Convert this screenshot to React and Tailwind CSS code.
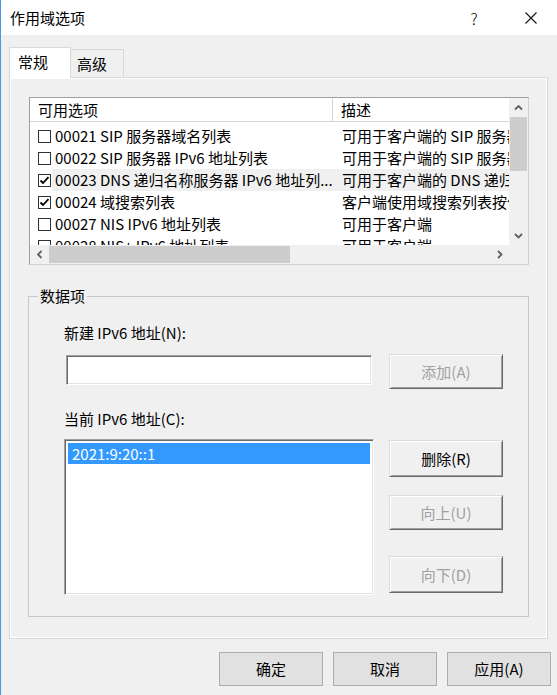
import React from "react";

const F = "font-['Noto_Sans_CJK_SC','Noto_Sans',sans-serif]";

function Chev({ dir }) {
  const p = {
    up: "M1 5.5 L4.5 2 L8 5.5",
    down: "M1 2 L4.5 5.5 L8 2",
    left: "M5.5 1 L2 4.5 L5.5 8",
    right: "M2 1 L5.5 4.5 L2 8",
  }[dir];
  const v = dir === "up" || dir === "down";
  return (
    <svg width={v ? 9 : 7} height={v ? 7 : 9} viewBox={v ? "0 0 9 7" : "0 0 7 9"}>
      <path d={p} fill="none" stroke="#606060" strokeWidth="1.8" />
    </svg>
  );
}

function Checkbox({ checked }) {
  return (
    <div className="w-[13px] h-[13px] border border-[#333333] bg-white flex items-center justify-center shrink-0">
      {checked && (
        <svg width="11" height="11" viewBox="0 0 11 11">
          <path d="M1.5 5.5 L4 8 L9.5 2.2" fill="none" stroke="#000" strokeWidth="1.8" />
        </svg>
      )}
    </div>
  );
}

const rows = [
  { c: false, t: "00021 SIP 服务器域名列表", d: "可用于客户端的 SIP 服务器域名列表" },
  { c: false, t: "00022 SIP 服务器 IPv6 地址列表", d: "可用于客户端的 SIP 服务器 IPv6 地址列表" },
  { c: true, t: "00023 DNS 递归名称服务器 IPv6 地址列...", d: "可用于客户端的 DNS 递归名称服务器", h: true },
  { c: true, t: "00024 域搜索列表", d: "客户端使用域搜索列表按优先顺序解析" },
  { c: false, t: "00027 NIS IPv6 地址列表", d: "可用于客户端" },
  { c: false, t: "00028 NIS+ IPv6 地址列表", d: "可用于客户端" },
];

const raised =
  "border border-t-[#dcdcdc] border-l-[#dcdcdc] border-b-[#696969] border-r-[#696969] shadow-[inset_1px_1px_0_#ffffff,inset_-1px_-1px_0_#a0a0a0] bg-[#f0f0f0] flex items-center justify-center text-[15px]";
const sunken =
  "border border-t-[#a0a0a0] border-l-[#a0a0a0] border-b-[#ffffff] border-r-[#ffffff] shadow-[inset_1px_1px_0_#696969,inset_-1px_-1px_0_#e3e3e3] bg-white";
const flatBtn =
  "w-[104px] h-[34px] bg-[#e1e1e1] border border-[#adadad] flex items-center justify-center text-[15px] text-black";

export default function App() {
  return (
    <div className={`${F} w-[557px] h-[695px] bg-[#f0f0f0] border-l border-[#4a9ae6] text-black text-[15px] leading-[20px] overflow-hidden`}>
      {/* title bar */}
      <div className="h-[35px] bg-white flex items-center pl-[9px]">
        <span className="flex-1">作用域选项</span>
        <span className="w-[14px] text-center font-light text-[16px] mr-[44px]">?</span>
        <svg width="12" height="12" viewBox="0 0 12 12" className="mr-[20px]">
          <path d="M0.5 0.5 L11.5 11.5 M11.5 0.5 L0.5 11.5" stroke="#111" strokeWidth="1.1" />
        </svg>
      </div>

      {/* tabs */}
      <div className="pl-[8px] pt-[12px] flex items-start">
        <div className="relative z-10 -mb-px h-[31px] w-[62px] bg-white border border-b-0 border-[#d9d9d9] pl-[8px] pt-[4px]">
          常规
        </div>
        <div className="mt-[2px] h-[28px] w-[53px] bg-[#f0f0f0] border border-l-0 border-b-0 border-[#d9d9d9] pl-[6px] pt-[4px]">
          高级
        </div>
      </div>

      {/* panel */}
      <div className="ml-[8px] w-[539px] h-[562px] border border-[#d9d9d9] shadow-[inset_0_0_0_1px_#ffffff] bg-[#f0f0f0] pt-[19px] pl-[19px]">
        {/* list view */}
        <div className="w-[500px] h-[168px] border border-t-[#a0a0a0] border-l-[#a0a0a0] border-r-[#d0d0d0] border-b-[#d0d0d0] bg-white flex flex-col">
          <div className="flex h-[147px]">
            <div className="w-[479px] overflow-hidden">
              <div className="h-[24px] flex items-center border-b border-[#d5d5d5] bg-white">
                <div className="w-[303px] h-full flex items-center pl-[8px] border-r border-[#d5d5d5]">可用选项</div>
                <div className="pl-[8px]">描述</div>
              </div>
              <div className="pt-[3px] h-[123px] overflow-hidden">
                {rows.map((r, i) => (
                  <div key={i} className="h-[22px] flex items-center whitespace-nowrap">
                    <div className="w-[22px] pl-[8px] shrink-0 flex items-center">
                      <Checkbox checked={r.c} />
                    </div>
                    <div className={`flex items-center h-full flex-1 ${r.h ? "bg-[#f0f0f0]" : ""}`}>
                      <div className="w-[281px] shrink-0 overflow-hidden pl-[3px]">{r.t}</div>
                      <div className="pl-[9px]">{r.d}</div>
                    </div>
                  </div>
                ))}
              </div>
            </div>
            {/* vertical scrollbar */}
            <div className="w-[19px] bg-[#f0f0f0] flex flex-col">
              <div className="h-[19px] flex items-center justify-center"><Chev dir="up" /></div>
              <div className="h-[54px] mx-[1px] bg-[#cdcdcd]" />
              <div className="flex-1" />
              <div className="h-[19px] flex items-center justify-center"><Chev dir="down" /></div>
            </div>
          </div>
          {/* horizontal scrollbar */}
          <div className="flex h-[19px] bg-[#f0f0f0]">
            <div className="w-[19px] flex items-center justify-center"><Chev dir="left" /></div>
            <div className="w-[241px] my-[1px] bg-[#cdcdcd]" />
            <div className="flex-1" />
            <div className="w-[19px] flex items-center justify-center"><Chev dir="right" /></div>
            <div className="w-[19px]" />
          </div>
        </div>

        {/* group box */}
        <fieldset className="mt-[21px] -ml-px w-[501px] h-[331px] border border-[#c8c8c8] pl-[35px]">
          <legend className="ml-[-26px] px-[2px] leading-[20px]">数据项</legend>
          <div className="mt-[17px]">新建 IPv6 地址(N):</div>
          <div className="mt-[12px] flex items-start">
            <div className={`ml-[2px] w-[306px] h-[30px] ${sunken}`} />
            <div className={`ml-[17px] -mt-px w-[114px] h-[35px] text-[#a0a0a0] ${raised}`}>添加(A)</div>
          </div>
          <div className="mt-[20px]">当前 IPv6 地址(C):</div>
          <div className="mt-[10px] flex items-start">
            <div className={`w-[310px] h-[156px] p-[3px] ${sunken}`}>
              <div className="h-[21px] bg-[#3399ff] text-white pl-[4px] flex items-center">2021:9:20::1</div>
            </div>
            <div className="ml-[15px] mt-[1px] flex flex-col">
              <div className={`w-[114px] h-[37px] ${raised}`}>删除(R)</div>
              <div className={`mt-[18px] w-[114px] h-[35px] text-[#a0a0a0] ${raised}`}>向上(U)</div>
              <div className={`mt-[26px] w-[114px] h-[37px] text-[#a0a0a0] ${raised}`}>向下(D)</div>
            </div>
          </div>
        </fieldset>
      </div>

      {/* bottom buttons */}
      <div className="mt-[13px] flex justify-end gap-[10px] pr-[6px]">
        <div className={flatBtn}>确定</div>
        <div className={flatBtn}>取消</div>
        <div className={flatBtn}>应用(A)</div>
      </div>
    </div>
  );
}
